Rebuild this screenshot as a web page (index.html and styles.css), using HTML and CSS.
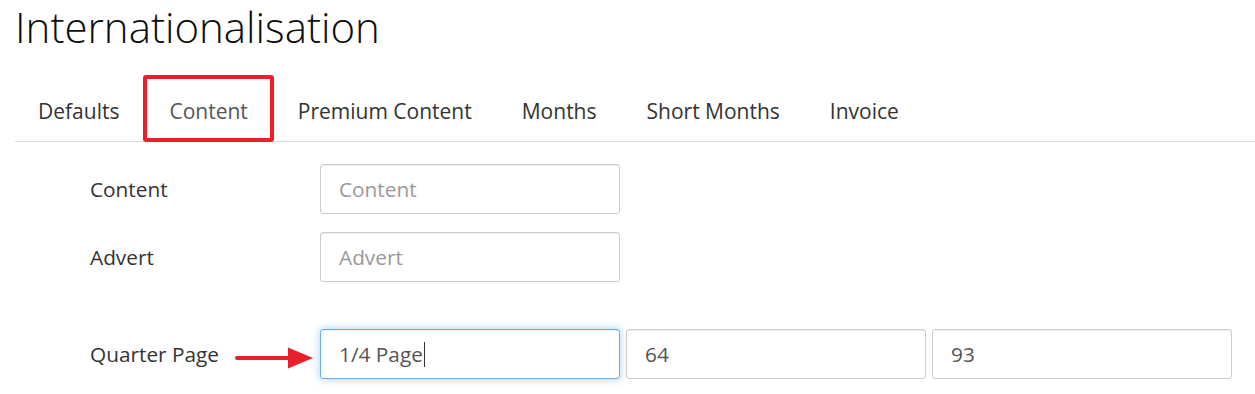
FILE: index.html
```html
<!DOCTYPE html>
<html lang="en">
<head>
<meta charset="utf-8">
<title>Internationalisation</title>
<link rel="stylesheet" href="styles.css">
</head>
<body>
<div class="page">
  <h1 class="title">Internationalisation</h1>
  <ul class="tabs">
    <li class="tab"><a href="#">Defaults</a></li>
    <li class="tab active"><a href="#">Content</a></li>
    <li class="tab"><a href="#">Premium Content</a></li>
    <li class="tab"><a href="#">Months</a></li>
    <li class="tab"><a href="#">Short Months</a></li>
    <li class="tab"><a href="#">Invoice</a></li>
  </ul>
  <form class="form">
    <div class="row">
      <label class="label" for="f-content">Content</label>
      <input class="field" id="f-content" type="text" placeholder="Content">
    </div>
    <div class="row">
      <label class="label" for="f-advert">Advert</label>
      <input class="field" id="f-advert" type="text" placeholder="Advert">
    </div>
    <div class="row row-wide">
      <div class="label label-arrow">
        <span>Quarter Page</span>
        <svg class="arrow" width="78" height="22" viewBox="0 0 78 22" aria-hidden="true">
          <line x1="2" y1="11" x2="56" y2="11" stroke="#e8202a" stroke-width="4" stroke-linecap="round"/>
          <polygon points="53,0.5 78,11 53,21.5" fill="#e8202a"/>
        </svg>
      </div>
      <div class="field field-focus" role="textbox">1/4 Page<span class="caret"></span></div>
      <input class="field" type="text" value="64">
      <input class="field" type="text" value="93">
    </div>
  </form>
</div>
</body>
</html>
```
FILE: styles.css
```css
html, body {
  margin: 0;
  padding: 0;
  background: #fff;
}

body {
  font-family: "Open Sans", "Liberation Sans", sans-serif;
  font-size: 20.8px;
  color: #333;
}

.page {
  padding-left: 15px;
}

.title {
  margin: 0;
  padding: 1px 0 0 0;
  font-weight: 300;
  font-size: 42px;
  line-height: 52px;
  color: #0d0d0d;
}

.tabs {
  list-style: none;
  display: flex;
  margin: 28px 0 0 0;
  padding: 0;
  border-bottom: 1px solid #ddd;
}

.tab {
  margin-right: 4px;
}

.tab a {
  display: block;
  padding: 15px 23px;
  font-size: 21px;
  line-height: 30px;
  color: #333;
  text-decoration: none;
}

.tab.active {
  position: relative;
}

.tab.active a {
  color: #555;
}

.tab.active::after {
  content: "";
  position: absolute;
  left: -3px;
  right: -3px;
  top: -6px;
  bottom: -1px;
  border: 4.5px solid #e8202a;
  border-radius: 3px;
  pointer-events: none;
}

.form {
  padding: 22px 0 0 74px;
}

.row {
  display: grid;
  grid-template-columns: 231px 300px;
  align-items: center;
  margin-bottom: 18px;
}

.row-wide {
  grid-template-columns: 225px 300px 300px 300px;
  column-gap: 6px;
  margin-top: 47px;
}

.label {
  color: #333;
  padding-left: 1px;
}

.label-arrow {
  display: flex;
  align-items: center;
  justify-content: space-between;
  padding-right: 1px;
}

.arrow {
  display: block;
  margin-top: 8px;
}

.field {
  box-sizing: border-box;
  height: 50px;
  width: 100%;
  padding: 0 18px;
  border: 1px solid #ccc;
  border-radius: 3px;
  font-family: inherit;
  font-size: 20.8px;
  color: #555;
  background: #fff;
  box-shadow: inset 0 1px 1px rgba(0, 0, 0, 0.075);
  outline: none;
}

.field::placeholder {
  color: #999;
}

.field-focus {
  display: flex;
  align-items: center;
  border-color: #66afe9;
  box-shadow: inset 0 1px 1px rgba(0, 0, 0, 0.075), 0 0 8px rgba(102, 175, 233, 0.6);
}

.caret {
  display: inline-block;
  width: 1px;
  height: 25px;
  margin-left: 1px;
  background: #333;
}
```
